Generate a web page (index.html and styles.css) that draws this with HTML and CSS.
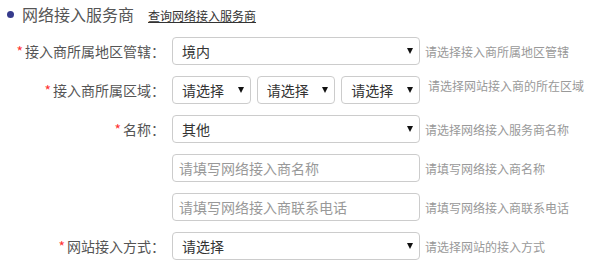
FILE: index.html
```html
<!DOCTYPE html>
<html lang="zh-CN">
<head>
    <meta charset="UTF-8">
    <title>网络接入服务商</title>
    <link rel="stylesheet" href="styles.css">
</head>
<body>
    <div class="section-head">
        <span class="dot"></span>
        <h3 class="section-title">网络接入服务商</h3>
        <a href="#" class="section-link">查询网络接入服务商</a>
    </div>

    <form class="form">
        <div class="row">
            <label class="label"><i class="req">*</i>接入商所属地区管辖：</label>
            <div class="field">
                <div class="sel">
                    <select><option>境内</option></select>
                </div>
            </div>
            <span class="hint">请选择接入商所属地区管辖</span>
        </div>

        <div class="row">
            <label class="label"><i class="req">*</i>接入商所属区域：</label>
            <div class="field field-split">
                <div class="sel"><select><option>请选择</option></select></div>
                <div class="sel"><select><option>请选择</option></select></div>
                <div class="sel"><select><option>请选择</option></select></div>
            </div>
            <span class="hint hint-top">请选择网站接入商的所在区域</span>
        </div>

        <div class="row">
            <label class="label"><i class="req">*</i>名称：</label>
            <div class="field">
                <div class="sel">
                    <select><option>其他</option></select>
                </div>
            </div>
            <span class="hint">请选择网络接入服务商名称</span>
        </div>

        <div class="row">
            <span class="label"></span>
            <div class="field">
                <input type="text" class="txt" placeholder="请填写网络接入商名称">
            </div>
            <span class="hint">请填写网络接入商名称</span>
        </div>

        <div class="row">
            <span class="label"></span>
            <div class="field">
                <input type="text" class="txt" placeholder="请填写网络接入商联系电话">
            </div>
            <span class="hint">请填写网络接入商联系电话</span>
        </div>

        <div class="row">
            <label class="label"><i class="req">*</i>网站接入方式：</label>
            <div class="field">
                <div class="sel">
                    <select><option>请选择</option></select>
                </div>
            </div>
            <span class="hint">请选择网站的接入方式</span>
        </div>
    </form>
</body>
</html>
```

FILE: styles.css
```css
* {
    margin: 0;
    padding: 0;
    box-sizing: border-box;
}
body {
    background: #fff;
    color: #555;
    font-family: "Noto Sans CJK SC", "Liberation Sans", sans-serif;
    font-size: 14px;
}

/* section header */
.section-head {
    display: flex;
    align-items: center;
    height: 28px;
    margin-bottom: 9px;
    padding-left: 7px;
}
.dot {
    width: 7px;
    height: 7px;
    border-radius: 50%;
    background: #363b8c;
    margin-right: 8px;
}
.section-title {
    font-size: 16px;
    font-weight: normal;
    color: #555;
    margin-right: 14px;
}
.section-link {
    font-size: 12px;
    color: #333;
    text-decoration: underline;
    margin-top: 2px;
}

/* form rows */
.row {
    display: flex;
    align-items: center;
    height: 28px;
    margin-bottom: 11px;
}
.label {
    width: 166px;
    flex: none;
    text-align: right;
    font-size: 14px;
    color: #555;
    padding-right: 1px;
}
.req {
    font-style: normal;
    color: #f33;
    margin-right: 2px;
}
.field {
    width: 248px;
    flex: none;
    margin-left: 6px;
    height: 28px;
}
.field-split {
    display: flex;
    gap: 6px;
}
.field-split .sel {
    flex: 1;
}
.hint {
    margin-left: 5px;
    font-size: 12px;
    color: #999;
}
.hint-top {
    margin-left: 8px;
    align-self: flex-start;
    margin-top: 1px;
}

/* select box */
.sel {
    position: relative;
    height: 28px;
}
.sel select {
    appearance: none;
    -webkit-appearance: none;
    width: 100%;
    height: 28px;
    border: 1px solid #ccc;
    border-radius: 4px;
    background: #fff;
    padding: 0 20px 0 9px;
    font-family: inherit;
    font-size: 14px;
    color: #333;
    outline: none;
}
.sel::after {
    content: "";
    position: absolute;
    right: 7px;
    top: 11px;
    border-left: 3px solid transparent;
    border-right: 3px solid transparent;
    border-top: 6px solid #111;
    pointer-events: none;
}

/* text input */
.txt {
    width: 100%;
    height: 28px;
    border: 1px solid #ccc;
    border-radius: 4px;
    padding: 0 6px;
    font-family: inherit;
    font-size: 14px;
    color: #333;
    outline: none;
}
.txt::placeholder {
    color: #999;
}
```
